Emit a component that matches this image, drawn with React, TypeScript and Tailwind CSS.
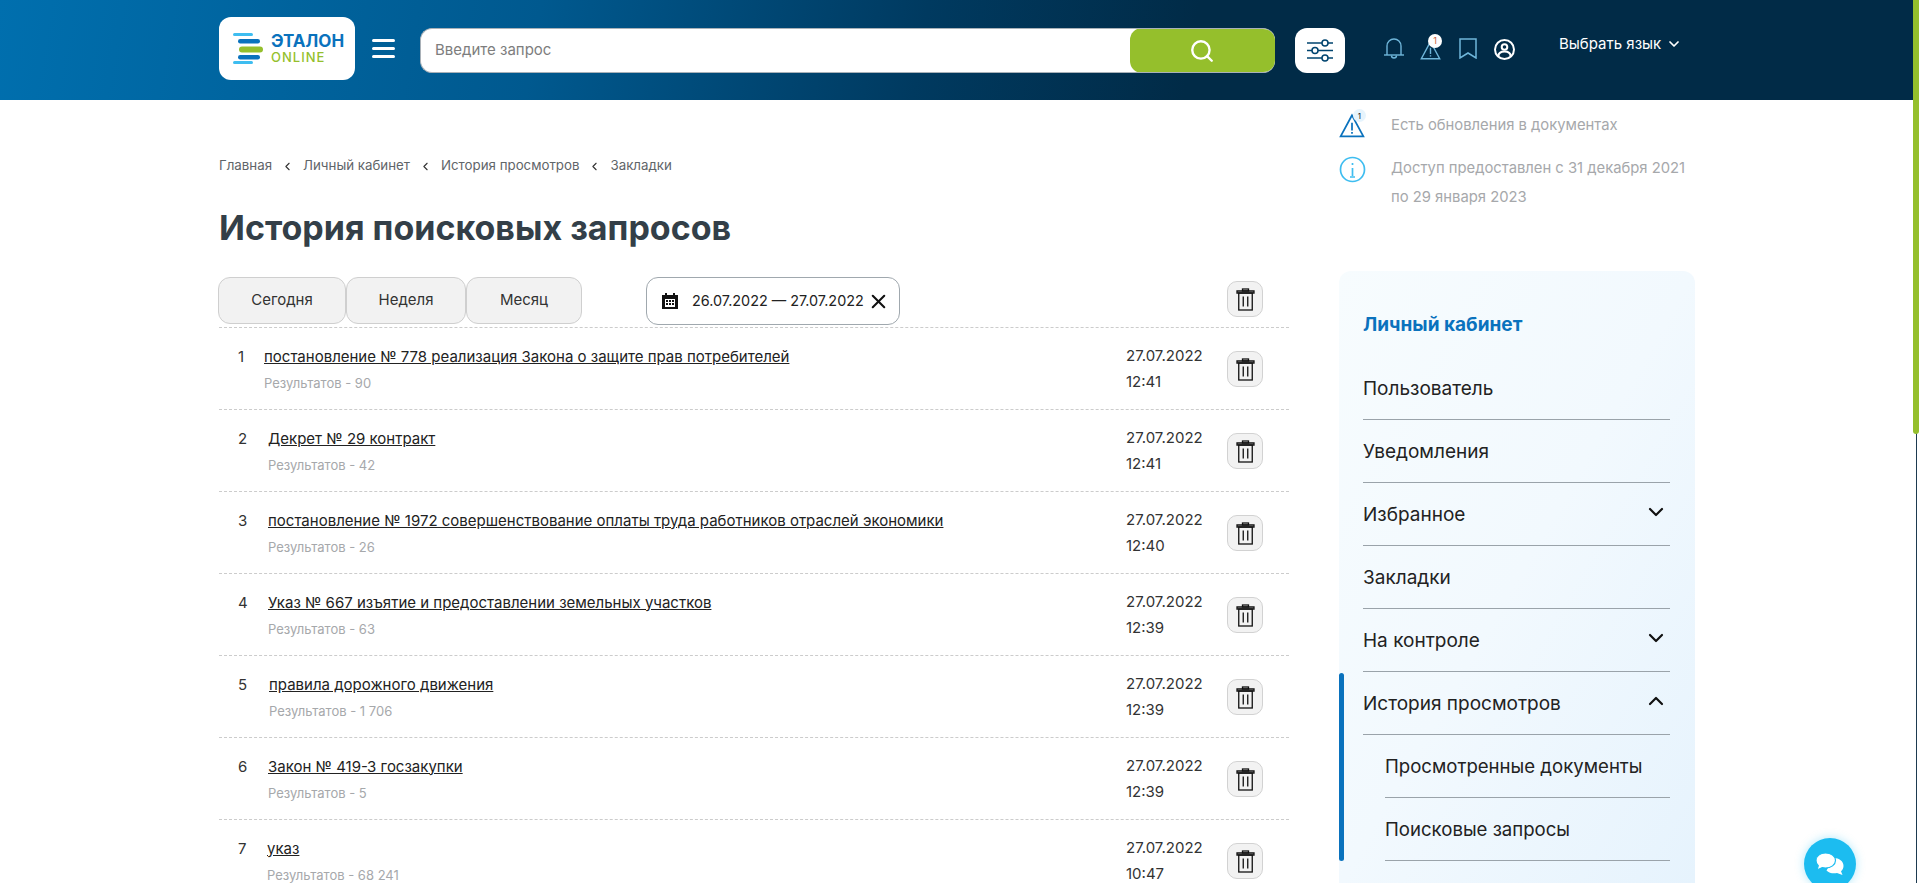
import { ChevronDown, ChevronLeft, ChevronUp, Search, X } from "lucide-react";

const rows = [
  { title: "постановление № 778 реализация Закона о защите прав потребителей", results: "Результатов - 90", time: "12:41", cell: "w-[26px]" },
  { title: "Декрет № 29 контракт", results: "Результатов - 42", time: "12:41", cell: "w-[30px]" },
  { title: "постановление № 1972 совершенствование оплаты труда работников отраслей экономики", results: "Результатов - 26", time: "12:40", cell: "w-[30px]" },
  { title: "Указ № 667 изъятие и предоставлении земельных участков", results: "Результатов - 63", time: "12:39", cell: "w-[30px]" },
  { title: "правила дорожного движения", results: "Результатов - 1 706", time: "12:39", cell: "w-[31px]" },
  { title: "Закон № 419-З госзакупки", results: "Результатов - 5", time: "12:39", cell: "w-[30px]" },
  { title: "указ", results: "Результатов - 68 241", time: "10:47", cell: "w-[29px]" },
];

function TrashButton() {
  return (
    <button className="flex h-[36px] w-[36px] items-center justify-center rounded-[10px] border border-[#d2d2d2] bg-[#f2f2f2]">
      <svg width="19" height="23" viewBox="0 0 19 23" fill="none" stroke="#111" strokeWidth="1.3">
        <path d="M1 5h17V3H1z" />
        <rect x="6.500" y="1" width="6" height="2" />
        <rect x="2.750" y="5" width="13.500" height="17" />
        <path d="M7.250 8.500v10M11.750 8.500v10" />
      </svg>
    </button>
  );
}

function BellIcon() {
  return (
    <svg width="22" height="21" viewBox="0 0 22 21" fill="none" stroke="#6fb6da" strokeWidth="1.4">
      <path d="M4 17V8a7 7 0 0 1 14 0v9" />
      <path d="M1 17h20" />
      <path d="M8.500 17.500a2.500 2.500 0 0 0 5 0" />
    </svg>
  );
}

function WarnIcon({ color, size }: { color: string; size: number }) {
  return (
    <svg width={size} height={size} viewBox="0 0 24 24" fill="none" stroke={color} strokeWidth="1.6">
      <path d="M12 3 1.500 22.500h21z" />
      <path d="M12 10v7M12 18.500v1.500" />
    </svg>
  );
}

function TopBar() {
  return (
    <header className="flex h-[100px] shrink-0 items-start bg-[linear-gradient(100deg,#006fae_0%,#00598f_28%,#003a60_48%,#012b47_62%,#012b47_100%)] pl-[219px]">
      <div className="mt-[17px] flex h-[63px] w-[136px] items-center rounded-[12px] bg-white pl-[14px]">
        <svg width="31" height="31" viewBox="0 0 31 31" className="mr-[7px]">
          <rect x="0" y="0" width="20" height="3" rx="1.500" fill="#3ebdf0" />
          <rect x="5" y="6" width="22" height="4.500" rx="2.200" fill="#0a72bd" />
          <rect x="6" y="13.500" width="24" height="6" rx="3" fill="#95bf2c" />
          <rect x="5" y="22" width="22" height="4.500" rx="2.200" fill="#0a72bd" />
          <rect x="0" y="28" width="20" height="3" rx="1.500" fill="#3ebdf0" />
        </svg>
        <div className="flex flex-col">
          <span className="text-[17px] leading-[17px] font-bold text-[#0a72bd]">ЭТАЛОН</span>
          <span className="text-[13px] leading-[14px] font-medium tracking-[1px] text-[#95bf2c]">ONLINE</span>
        </div>
      </div>
      <button className="mt-[39px] ml-[17px] flex w-[23px] flex-col gap-[5.5px]">
        <span className="h-[2.5px] rounded-full bg-white" />
        <span className="h-[2.5px] rounded-full bg-white" />
        <span className="h-[2.5px] rounded-full bg-white" />
      </button>
      <div className="mt-[28px] ml-[25px] flex h-[45px] w-[855px] overflow-hidden rounded-[12px] border-y border-l border-[#a9b1b8] bg-white">
        <div className="flex flex-1 items-center pl-[14px] text-[15px] text-[#7d7d7d]">Введите запрос</div>
        <button className="my-[-1px] flex w-[145px] items-center justify-center rounded-[12px] bg-[#95bf2c]">
          <Search size={26} color="white" strokeWidth={2.2} className="mr-[2px]" />
        </button>
      </div>
      <button className="mt-[28px] ml-[20px] flex h-[45px] w-[50px] items-center justify-center rounded-[12px] bg-white">
        <svg width="26" height="23" viewBox="0 0 26 23" fill="none" stroke="#00446f" strokeWidth="1.500">
          <path d="M0 4h15M21 4h5M0 11.500h5M11 11.500h15M0 19h15M21 19h5" />
          <circle cx="18" cy="4" r="3" />
          <circle cx="8" cy="11.500" r="3" />
          <circle cx="18" cy="19" r="3" />
        </svg>
      </button>
      <div className="mt-[38px] ml-[38px] flex items-start">
        <BellIcon />
        <div className="relative mt-[1px] ml-[15px] h-[21px] w-[21px]">
          <WarnIcon color="#6fb6da" size={21} />
          <span className="absolute top-[-5px] left-[8px] flex h-[14px] w-[14px] items-center justify-center rounded-full bg-white text-[9px] text-[#c8603a]">1</span>
        </div>
        <svg width="18" height="21" viewBox="0 0 18 21" fill="none" stroke="#6fb6da" strokeWidth="1.500" className="ml-[18px]">
          <path d="M1 1h16v19l-8-5-8 5z" />
        </svg>
        <svg width="21" height="21" viewBox="0 0 21 21" fill="none" stroke="white" strokeWidth="2" className="mt-[1px] ml-[17px]">
          <circle cx="10.500" cy="10.500" r="9.500" />
          <circle cx="10.500" cy="8" r="2.800" />
          <path d="M4.500 17c0-3 2.500-4.500 6-4.500s6 1.500 6 4.500" />
        </svg>
      </div>
      <button className="mt-[34px] ml-[44px] flex items-center gap-[5px] text-[15px] leading-[20px] text-white">
        Выбрать язык
        <ChevronDown size={16} strokeWidth={2.600} />
      </button>
    </header>
  );
}

function Breadcrumbs() {
  const items = ["Главная", "Личный кабинет", "История просмотров", "Закладки"];
  return (
    <nav className="flex h-[20px] items-center text-[13.3px] text-[#5f6569]">
      {items.map((item, i) => (
        <span key={item} className="flex items-center">
          {i > 0 && <ChevronLeft size={13} strokeWidth={2} className="mx-[9px] text-[#333]" />}
          {item}
        </span>
      ))}
    </nav>
  );
}

function HistoryList() {
  return (
    <div className="ml-[219px] w-[1070px] pt-[56px]">
      <Breadcrumbs />
      <h1 className="mt-[30px] text-[34px] leading-[44px] font-bold text-[#333f48]">История поисковых запросов</h1>
      <div className="mt-[27px] flex h-[51px] items-start border-b border-dashed border-[#cccccc]">
        <button className="ml-[-1px] h-[47px] w-[128px] rounded-[12px] border border-[#cfcfcf] bg-[#f2f2f2] text-[15px] text-[#333]">Сегодня</button>
        <button className="h-[47px] w-[120px] rounded-[12px] border border-[#cfcfcf] bg-[#f2f2f2] text-[15px] text-[#333]">Неделя</button>
        <button className="h-[47px] w-[116px] rounded-[12px] border border-[#cfcfcf] bg-[#f2f2f2] text-[15px] text-[#333]">Месяц</button>
        <div className="ml-[64px] flex h-[48px] w-[254px] items-center rounded-[12px] border border-[#a0a8ae] pl-[15px] text-[14.4px] text-[#222]">
          <svg width="16" height="16" viewBox="0 0 16 16" className="shrink-0">
            <path d="M0 2h3V0h2v2h6V0h2v2h3v14H0z" fill="#111" />
            <path d="M3 6h10v8H3z" fill="white" />
            <path d="M4 7h2v2H4zM7 7h2v2H7zM10 7h2v2h-2zM4 10h2v2H4zM7 10h2v2H7zM10 10h2v2h-2z" fill="#111" />
          </svg>
          <span className="ml-[14px]">26.07.2022 — 27.07.2022</span>
          <X size={23} strokeWidth={2.200} className="ml-[3px] shrink-0 text-[#111]" />
        </div>
        <div className="mt-[4px] ml-[327px]">
          <TrashButton />
        </div>
      </div>
      {rows.map((row, i) => (
        <div key={row.title} className="flex h-[82px] border-b border-dashed border-[#cccccc] pl-[19px]">
          <div className="flex flex-1">
            <span className={`${row.cell} pt-[16.5px] text-[15px] leading-[24px] text-[#333]`}>{i + 1}</span>
            <div className="pt-[16.5px]">
              <a className="block text-[15px] leading-[24px] text-[#222] underline">{row.title}</a>
              <div className="mt-[2.5px] text-[13px] leading-[24px] text-[#a6a8ab]">{row.results}</div>
            </div>
          </div>
          <div className="w-[101px] pt-[16px] text-[15px] text-[#333]">
            <div className="leading-[24px]">27.07.2022</div>
            <div className="mt-[2px] leading-[24px]">{row.time}</div>
          </div>
          <div className="mt-[23px] w-[62px]">
            <TrashButton />
          </div>
        </div>
      ))}
    </div>
  );
}

function SideItem({ label, sub, open }: { label: string; sub?: boolean; open?: boolean | null }) {
  return (
    <div className={`flex h-[63px] items-center justify-between border-b border-[#9aa3aa] pr-[2px] pt-[2px] text-[#222] ${sub ? "ml-[22px] text-[18.6px]" : "text-[19px]"}`}>
      {label}
      {open === false && <ChevronDown size={24} strokeWidth={2.200} className="mb-[6px] text-[#111]" />}
      {open === true && <ChevronUp size={24} strokeWidth={2.200} className="mb-[6px] text-[#111]" />}
    </div>
  );
}

function SidePanel() {
  return (
    <aside className="ml-[50px] flex w-[356px] flex-col pt-[13px]">
      <div className="flex h-[24px] items-center">
        <div className="relative mt-[-1px] h-[25px] w-[27px]">
          <WarnIcon color="#0a72bd" size={26} />
          <span className="absolute top-[-3px] left-[14px] flex h-[13px] w-[13px] items-center justify-center rounded-full bg-[#e6f4fd] text-[8px] text-[#222]">1</span>
        </div>
        <span className="ml-[25px] text-[14.8px] text-[#a6a8ab]">Есть обновления в документах</span>
      </div>
      <div className="mt-[17px] flex items-start">
        <svg width="27" height="27" viewBox="0 0 27 27" fill="none" stroke="#3ebdf0" strokeWidth="1.700" className="mt-[2px] shrink-0">
          <circle cx="13.500" cy="13.500" r="12" />
          <path d="M13.500 12v8M11 21h5M13.500 7v2" />
        </svg>
        <p className="ml-[25px] text-[14.8px] leading-[29px] text-[#a6a8ab]">
          Доступ предоставлен с 31 декабря 2021
          <br />
          по 29 января 2023
        </p>
      </div>
      <div className="mt-[59px] flex-1 rounded-t-[12px] bg-[linear-gradient(120deg,#f7fcfe_0%,#f2f9fe_50%,#e6f3fd_100%)] pt-[42px] pr-[25px] pl-[24px]">
        <div className="text-[19px] leading-[24px] font-bold text-[#0a72bd]">Личный кабинет</div>
        <div className="mt-[20px]">
          <SideItem label="Пользователь" />
          <SideItem label="Уведомления" />
          <SideItem label="Избранное" open={false} />
          <SideItem label="Закладки" />
          <SideItem label="На контроле" open={false} />
          <div className="relative">
            <span className="absolute top-[1px] bottom-0 left-[-24px] w-[5px] rounded-full bg-[#0a72bd]" />
            <SideItem label="История просмотров" open={true} />
            <SideItem label="Просмотренные документы" sub />
            <SideItem label="Поисковые запросы" sub />
          </div>
        </div>
      </div>
    </aside>
  );
}

export default function App() {
  return (
    <div className="relative flex h-screen flex-col overflow-hidden bg-white font-['Inter',sans-serif]">
      <TopBar />
      <main className="flex min-h-0 flex-1">
        <HistoryList />
        <SidePanel />
      </main>
      <div className="absolute top-0 right-[2px] bottom-0 w-[1px] bg-[#1d3a50]" />
      <div className="absolute top-0 right-0 h-[434px] w-[6px] rounded-b-full bg-[#95bf2c]" />
      <button className="absolute top-[838px] left-[1804px] flex h-[52px] w-[52px] items-center justify-center rounded-full bg-[#1cbcf0] shadow-[0_0_10px_rgba(28,188,240,0.35)]">
        <svg width="30" height="25" viewBox="0 0 30 25" fill="white">
          <path d="M19 6c5 0 9.500 3.200 9.500 8 0 2.200-1 4-2.500 5.300l1.500 3.700-5.500-2c-3.500.8-8 .1-10.500-2.500z" />
          <path d="M10.500 1c5.500 0 10 3.200 10 7.500s-4.500 7.500-10 7.500c-1.200 0-2.300-.1-3.300-.4L2 18l1.300-4.300C1.800 12.400 1 10.600 1 8.500 1 4.200 5 1 10.500 1z" stroke="#1cbcf0" strokeWidth="1.200" />
        </svg>
      </button>
    </div>
  );
}
